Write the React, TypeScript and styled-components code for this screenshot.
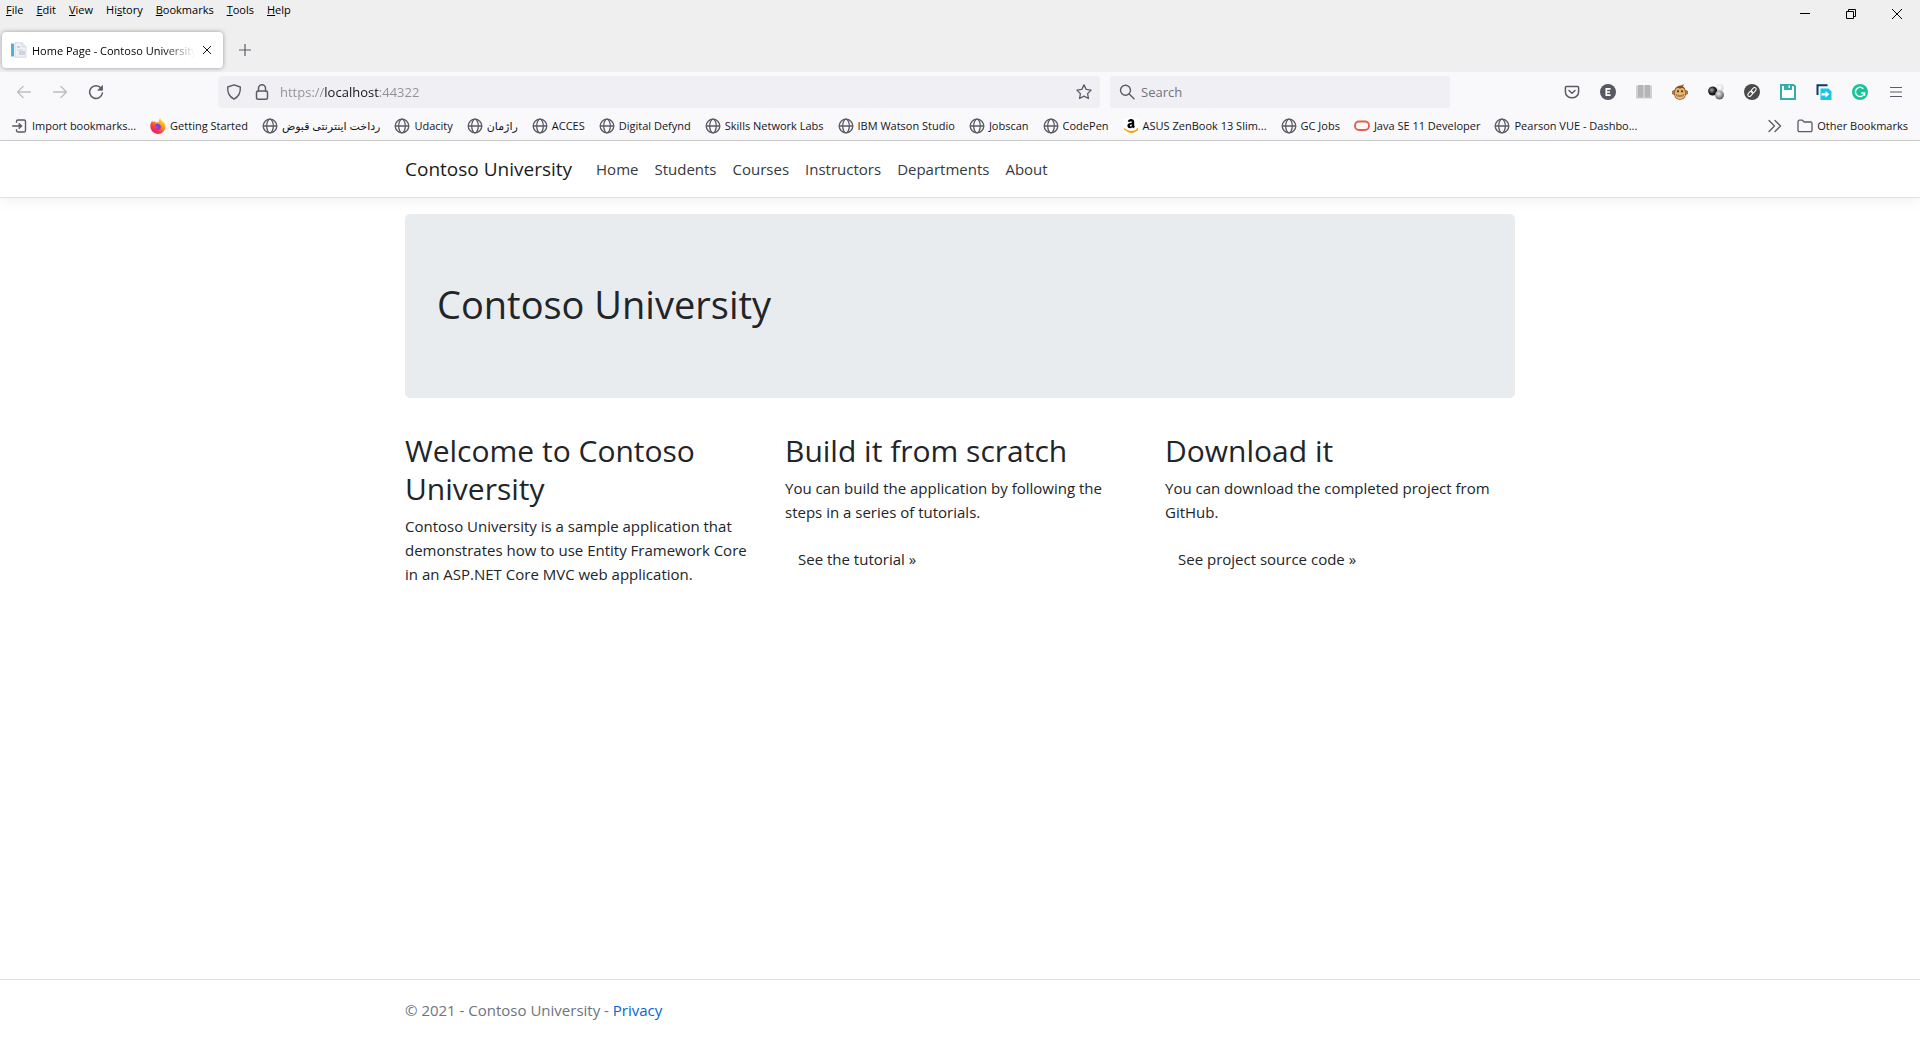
import React from "react";
import styled, { createGlobalStyle, css } from "styled-components";

const GlobalStyle = createGlobalStyle`
  *, *::before, *::after { box-sizing: border-box; }
  body { margin: 0; background: #fff; }
  button, input { font: inherit; color: inherit; }
  svg { display: block; flex: none; }
`;

const Window = styled.div`
  display: flex;
  flex-direction: column;
  min-height: 100vh;
  font-family: "Segoe UI", "Open Sans", "Noto Sans", "DejaVu Sans", sans-serif;
`;

/* ---------- browser chrome ---------- */

const Chrome = styled.header`
  background: #f9f9fb;
  border-bottom: 1px solid #ccc;
  font-size: 11px;
  color: #15141a;
`;

const TitleArea = styled.div`
  display: flex;
  justify-content: space-between;
  height: 72px;
  background: #efefef;
`;

const TitleStart = styled.div`
  display: flex;
  flex-direction: column;
  justify-content: space-between;
`;

const plainButton = css`
  border: 0;
  padding: 0;
  background: none;
  cursor: default;
`;

const MenuBar = styled.div`
  display: flex;
  gap: 13px;
  height: 20px;
  padding: 0 6px;
`;

const MenuButton = styled.button`
  ${plainButton}
  line-height: 20px;
  color: #000;
`;

const TabStrip = styled.div`
  display: flex;
  align-items: center;
  gap: 16px;
  height: 44px;
  padding: 0 2px;
`;

const Tab = styled.div`
  display: flex;
  align-items: center;
  gap: 4px;
  width: 221px;
  height: 36px;
  padding: 0 8px;
  background: #fff;
  border-radius: 4px;
  box-shadow: 0 0 4px rgba(90, 90, 110, 0.6);
`;

const TabTitle = styled.span`
  flex: 1;
  overflow: hidden;
  white-space: nowrap;
  color: #000;
  mask-image: linear-gradient(to left, transparent, #000 32px);
`;

const IconButton = styled.button<{ $w?: number; $h?: number; $dim?: boolean }>`
  ${plainButton}
  display: flex;
  align-items: center;
  justify-content: center;
  flex: none;
  width: ${(p) => p.$w ?? 36}px;
  height: ${(p) => p.$h ?? 32}px;
  color: ${(p) => (p.$dim ? "#bcbcc2" : "#5b5b66")};
`;

const WindowControls = styled.div`
  display: flex;
  height: 28px;

  button { color: #000; }
`;

const Toolbar = styled.div`
  display: flex;
  align-items: center;
  justify-content: space-between;
  height: 40px;
  padding: 0 6px;
`;

const NavButtons = styled.div`
  display: flex;
  flex: 1 1 212px;
`;

const AddressField = styled.div`
  display: flex;
  align-items: center;
  flex: 0 1 882px;
  height: 32px;
  padding: 0 2px;
  border-radius: 4px;
  background: #f0f0f4;
`;

const AddressInput = styled.input`
  flex: 1;
  min-width: 0;
  margin-left: 4px;
  border: 0;
  padding: 0;
  outline: 0;
  font-size: 13px;
  line-height: 24px;
  color: transparent;
  caret-color: #15141a;
  background: linear-gradient(to right, #8f8f96 44px, #15141a 44px 99px, #8f8f96 99px);
  background-clip: text;
  -webkit-background-clip: text;
`;

const SearchField = styled.label`
  display: flex;
  align-items: center;
  gap: 6px;
  flex: 0 1 340px;
  height: 32px;
  margin-left: 10px;
  padding: 0 9px;
  border-radius: 4px;
  background: #f0f0f4;
  color: #5b5b66;
`;

const SearchInput = styled.input`
  flex: 1;
  min-width: 0;
  border: 0;
  padding: 0;
  outline: 0;
  background: none;
  font-size: 13px;

  &::placeholder { color: #72727c; opacity: 1; }
`;

const Extensions = styled.div`
  display: flex;
  justify-content: flex-end;
  flex: 1 1 464px;
`;

const BookmarkBar = styled.nav`
  display: flex;
  align-items: center;
  justify-content: space-between;
  height: 28px;
  padding: 0 12px;
`;

const BookmarkList = styled.div`
  display: flex;
  align-items: center;
  gap: 14px;
`;

const Bookmark = styled.a`
  display: flex;
  align-items: center;
  gap: 4px;
  line-height: 20px;
  white-space: nowrap;
  color: inherit;
  text-decoration: none;

  svg { color: #5b5b66; }
`;

/* ---------- web page ---------- */

const Site = styled.div`
  display: flex;
  flex: 1;
  flex-direction: column;
  font-size: 15px;
  line-height: 24px;
  color: #212529;
`;

const Container = styled.div`
  width: 100%;
  max-width: 1140px;
  margin: 0 auto;
  padding: 0 15px;
`;

const SiteHeader = styled.div`
  padding: 8px 0;
  margin-bottom: 16px;
  background: #fff;
  border-bottom: 1px solid #dee2e6;
  box-shadow: 0 4px 12px rgba(0, 0, 0, 0.05);
`;

const NavRow = styled(Container)`
  display: flex;
  align-items: center;
  height: 40px;
`;

const Brand = styled.a`
  margin-right: 16px;
  font-size: 19px;
  line-height: 30px;
  color: #1b1b1b;
  text-decoration: none;
`;

const NavLink = styled.a`
  padding: 8px;
  color: #343a40;
  text-decoration: none;
`;

const Jumbotron = styled.section`
  padding: 64px 32px;
  margin-bottom: 32px;
  border-radius: 5px;
  background: #e9ecef;
`;

const headingText = css`
  margin: 0 0 6px;
  padding-top: 2px;
  font-weight: 400;
`;

const Title = styled.h1`
  ${headingText}
  font-size: 38px;
  line-height: 48px;
`;

const Columns = styled.div`
  display: grid;
  grid-template-columns: repeat(3, 1fr);
  gap: 30px;
`;

const Heading = styled.h2`
  ${headingText}
  font-size: 30px;
  line-height: 38px;
`;

const Text = styled.p`
  margin: 0 0 16px;
`;

const ActionLink = styled.a`
  display: inline-block;
  padding: 6px 12px;
  border: 1px solid transparent;
  color: #212529;
  text-decoration: none;
`;

const SiteFooter = styled.footer`
  margin-top: auto;
  border-top: 1px solid #dee2e6;
  line-height: 60px;
  color: #6c757d;

  a { color: #0366d6; text-decoration: none; }
`;

/* ---------- icons ---------- */

type IconProps = { size?: number; children: React.ReactNode; w?: number };
const Icon = ({ size = 16, w = 1.3, children }: IconProps) => (
  <svg width={size} height={size} viewBox="0 0 16 16" fill="none" stroke="currentColor" strokeWidth={w} strokeLinecap="round" strokeLinejoin="round" aria-hidden="true">
    {children}
  </svg>
);

const Globe = () => (
  <Icon w={1.3}>
    <circle cx="8" cy="8" r="6.8" />
    <ellipse cx="8" cy="8" rx="3.3" ry="6.8" />
    <path d="M1.400 8h13.200" />
  </Icon>
);

const ImportIcon = () => (
  <Icon w={1.4}>
    <path d="M4.500 4.200V3.400A1.400 1.400 0 0 1 5.900 2h6.200A1.400 1.400 0 0 1 13.500 3.400v9.200a1.400 1.400 0 0 1-1.400 1.400H5.900A1.400 1.400 0 0 1 4.500 12.600v-.8M.7 8h8" />
    <path d="M7.300 5.300 10.200 8l-2.900 2.700z" fill="currentColor" strokeWidth="0.8" />
  </Icon>
);

const FirefoxIcon = () => (
  <svg width="16" height="16" viewBox="0 0 16 16" aria-hidden="true">
    <defs>
      <linearGradient id="fox" x1="0.85" y1="0.1" x2="0.2" y2="0.95">
        <stop offset="0" stopColor="#fff44f" />
        <stop offset="0.35" stopColor="#ff980e" />
        <stop offset="0.7" stopColor="#ff3647" />
        <stop offset="1" stopColor="#e31587" />
      </linearGradient>
    </defs>
    <path d="M10.300 0c.2 1.500 1 2.200 2 3 1.700 1.300 3.300 3 3.300 5.500A7.600 7.600 0 0 1 8 16 7.600 7.600 0 0 1 .3 8.400C.3 5.900 1 4.300 2.300 2.700l.6 1.500 1.800-.9L6 4.500l2.700-.3C8.600 2.500 9.200 1 10.300 0z" fill="url(#fox)" />
    <path d="M5.200 7c1-1.400 2.700-1.600 4-.8 1.800 1 2.400 3.200 1 4.600-1.400 1.500-4 1.300-5-.4 1.500.5 2.600.2 3.200-.8-1.200.3-1.600-.6-2.400-1-.5-.3-1-.8-.8-1.600z" fill="#7542e5" />
  </svg>
);

const AmazonIcon = () => (
  <svg width="16" height="16" viewBox="0 0 16 16" aria-hidden="true">
    <rect width="16" height="16" rx="2" fill="#fff" />
    <path d="M4.800 3.600C5.100 1.900 6.300 1 8 1c2.100 0 3.200 1 3.200 2.900v3.300c0 .7.200 1 .8 1.600L10.300 10.300c-.5-.3-.8-.7-1-1.100-1.600 1.800-4.900 1.200-4.900-1.500 0-2.100 1.900-2.900 4.400-2.900 0-1-.1-1.600-.9-1.600-.6 0-.9.300-1 .9zM8.800 6.400c-1.200 0-1.900.3-1.900 1.200 0 1.400 1.900 1.100 1.900-.7z" fill="#000" />
    <path d="M1.500 11c3.600 3.300 9 3.300 12.500 1.200l.4-1.500" fill="none" stroke="#f90" strokeWidth="1.500" strokeLinecap="round" />
    <path d="M4.500 13.500c2.300 1 5.200.9 7.500 0" fill="none" stroke="#f90" strokeWidth="1.300" />
  </svg>
);

const OracleIcon = () => (
  <svg width="16" height="16" viewBox="0 0 16 16" aria-hidden="true">
    <rect x="1" y="3.500" width="14" height="8.500" rx="4" fill="none" stroke="#e5604c" strokeWidth="1.900" />
  </svg>
);

const PageIcon = () => (
  <svg width="18" height="16" viewBox="0 0 18 16" aria-hidden="true">
    <path d="M5 .7h7l4 4v10.600H5z" fill="#eef1f6" stroke="#cdd3de" strokeWidth="0.8" />
    <path d="M12 .7v4h4" fill="none" stroke="#cdd3de" strokeWidth="0.8" />
    <path d="M7 4h3v2H7zM9 9h6v4H9z" fill="#ccd3df" />
    <path d="M7 8h6" stroke="#ccd3df" />
    <rect x="1" y="1.500" width="3" height="13" fill="#5da9da" />
  </svg>
);

const FolderIcon = () => (
  <Icon>
    <path d="M1 3.600A1.400 1.400 0 0 1 2.400 2.200h3L7.200 4h6.400A1.400 1.400 0 0 1 15 5.400v6.800a1.400 1.400 0 0 1-1.400 1.400H2.400A1.400 1.400 0 0 1 1 12.200z" />
  </Icon>
);

const extensions: { name: string; art: React.ReactNode }[] = [
  {
    name: "Save to Pocket",
    art: (
      <Icon w={1.500}>
        <path d="M2.400 2.500h11.200c.6 0 1 .4 1 1V8a6.600 5.800 0 0 1-13.200 0V3.500c0-.6.4-1 1-1z" />
        <path d="M5 6.500 8 9.300l3-2.800" />
      </Icon>
    ),
  },
  {
    name: "E extension",
    art: (
      <svg width="16" height="16" viewBox="0 0 16 16">
        <circle cx="8" cy="8" r="8" fill="#585863" />
        <path d="M10.600 4.800H6.300v6.400h4.300M6.300 8h3.700" fill="none" stroke="#fff" strokeWidth="1.700" />
      </svg>
    ),
  },
  {
    name: "Reader",
    art: (
      <svg width="16" height="16" viewBox="0 0 16 16">
        <path d="M0 1.500h16v13H0z" fill="#d0d0d0" />
        <path d="M2 1h5.500v12.500H2zM8.500 1H14v12.500H8.500z" fill="#b5b5b5" />
        <path d="M8 1v14" stroke="#e4e4e4" strokeWidth="0.6" />
      </svg>
    ),
  },
  {
    name: "Monkey scripts",
    art: (
      <svg width="16" height="16" viewBox="0 0 16 16">
        <circle cx="2" cy="8.500" r="1.900" fill="#c98542" stroke="#6b3a12" strokeWidth="0.6" />
        <circle cx="14" cy="8.500" r="1.900" fill="#c98542" stroke="#6b3a12" strokeWidth="0.6" />
        <path d="M2.300 8C2.300 4.500 4.500 2.300 7.500 1.800 9 1.500 10.500 1 12 .3c-.3 1-.8 1.500-1.300 2 2 1.200 3 3.200 3 5.700 1 4.500-1.700 7.700-5.700 7.700S1.500 12.500 2.300 8z" fill="#8a4b17" />
        <path d="M3.200 7.500c0-2.200 1-3.500 2.700-3.500.9 0 1.600.4 2.100.8.500-.4 1.200-.8 2.100-.8 1.700 0 2.700 1.300 2.700 3.500 1.600 3.800-.8 7.600-4.800 7.600s-6.200-3.800-4.800-7.600z" fill="#eab676" />
        <ellipse cx="6" cy="7.200" rx="0.8" ry="1.200" fill="#1c3a1c" />
        <ellipse cx="10" cy="7.200" rx="0.8" ry="1.200" fill="#1c3a1c" />
        <path d="M4 10.500c1.400 1.400 6.600 1.400 8 0-.6 2.600-7.400 2.600-8 0z" fill="#fff" stroke="#7a3b12" strokeWidth="0.600" />
      </svg>
    ),
  },
  {
    name: "Spheres",
    art: (
      <svg width="16" height="16" viewBox="0 0 16 16">
        <defs>
          <radialGradient id="dark" cx="0.4" cy="0.4" r="0.6"><stop offset="0" stopColor="#aaa" /><stop offset="0.6" stopColor="#222" /><stop offset="1" stopColor="#111" /></radialGradient>
          <radialGradient id="mid" cx="0.4" cy="0.35" r="0.6"><stop offset="0" stopColor="#eee" /><stop offset="1" stopColor="#666" /></radialGradient>
          <radialGradient id="light" cx="0.4" cy="0.4" r="0.6"><stop offset="0" stopColor="#fff" /><stop offset="1" stopColor="#d8d8d8" /></radialGradient>
        </defs>
        <circle cx="12" cy="4" r="3.700" fill="url(#light)" />
        <circle cx="4.700" cy="7" r="4.600" fill="url(#dark)" />
        <circle cx="11.500" cy="11" r="4.500" fill="url(#mid)" />
      </svg>
    ),
  },
  {
    name: "Link tools",
    art: (
      <svg width="16" height="16" viewBox="0 0 16 16">
        <circle cx="8" cy="8" r="8" fill="#4b4b4b" />
        <g transform="rotate(-48 8 8)" fill="none" stroke="#fff" strokeWidth="1">
          <rect x="2.600" y="6.300" width="6" height="3.400" rx="1.700" />
          <rect x="7.400" y="6.300" width="6" height="3.400" rx="1.700" />
        </g>
      </svg>
    ),
  },
  {
    name: "Save page",
    art: (
      <svg width="16" height="16" viewBox="0 0 16 16">
        <path d="M1 1h12.500L15 2.500V15H1z" fill="#fff" stroke="#33adad" strokeWidth="2" />
        <path d="M4 0h8v6H4z" fill="#33adad" />
        <path d="M8.500 1.500H10V4H8.500z" fill="#fff" />
      </svg>
    ),
  },
  {
    name: "Send page",
    art: (
      <svg width="16" height="16" viewBox="0 0 16 16">
        <path d="M1.500 11V1.200h10" fill="none" stroke="#0b3b66" strokeWidth="2" />
        <path d="M4.500 4.500h8l3 3V16h-11z" fill="#14c8e6" />
        <path d="M5.500 9.200h4V7l3.800 3.300-3.800 3.300v-2.200h-4z" fill="#fff" />
      </svg>
    ),
  },
  {
    name: "Grammar check",
    art: (
      <svg width="16" height="16" viewBox="0 0 16 16">
        <circle cx="8" cy="8" r="8" fill="#15c39a" />
        <path d="M11.300 4.700A4.600 4.600 0 1 0 12.500 9H9.200M12.500 9v2.800" fill="none" stroke="#fff" strokeWidth="1.500" />
      </svg>
    ),
  },
  {
    name: "Application menu",
    art: (
      <Icon w={1.2}>
        <path d="M2.500 3.500h11M2.500 8h11M2.500 12.500h11" />
      </Icon>
    ),
  },
];

const menus: [string, string, string][] = [
  ["", "F", "ile"],
  ["", "E", "dit"],
  ["", "V", "iew"],
  ["Hi", "s", "tory"],
  ["", "B", "ookmarks"],
  ["", "T", "ools"],
  ["", "H", "elp"],
];

const bookmarks: { label: string; icon?: React.ReactNode }[] = [
  { label: "Import bookmarks...", icon: <ImportIcon /> },
  { label: "Getting Started", icon: <FirefoxIcon /> },
  { label: "رداخت اینترنتی قبوض" },
  { label: "Udacity" },
  { label: "راژمان" },
  { label: "ACCES" },
  { label: "Digital Defynd" },
  { label: "Skills Network Labs" },
  { label: "IBM Watson Studio" },
  { label: "Jobscan" },
  { label: "CodePen" },
  { label: "ASUS ZenBook 13 Slim...", icon: <AmazonIcon /> },
  { label: "GC Jobs" },
  { label: "Java SE 11 Developer", icon: <OracleIcon /> },
  { label: "Pearson VUE - Dashbo..." },
];

const navLinks = ["Home", "Students", "Courses", "Instructors", "Departments", "About"];

const BrowserChrome = () => (
  <Chrome>
    <TitleArea>
      <TitleStart>
        <MenuBar>
          {menus.map(([before, key, after]) => (
            <MenuButton key={key + after}>
              {before}
              <u>{key}</u>
              {after}
            </MenuButton>
          ))}
        </MenuBar>
        <TabStrip>
          <Tab>
            <PageIcon />
            <TabTitle>Home Page - Contoso University</TabTitle>
            <IconButton $w={16} $h={24} aria-label="Close tab">
              <svg width="10" height="10" viewBox="0 0 10 10" stroke="#15141a"><path d="M1 1l8 8M9 1l-8 8" /></svg>
            </IconButton>
          </Tab>
          <IconButton $w={12} aria-label="New tab">
            <svg width="12" height="12" viewBox="0 0 12 12" stroke="#5b5b66" strokeWidth="1.200"><path d="M6 0v12M0 6h12" /></svg>
          </IconButton>
        </TabStrip>
      </TitleStart>
      <WindowControls>
        <IconButton $w={46} $h={28} aria-label="Minimize">
          <svg width="10" height="10" viewBox="0 0 10 10" stroke="currentColor"><path d="M0 4.500h10" /></svg>
        </IconButton>
        <IconButton $w={46} $h={28} aria-label="Restore">
          <svg width="10" height="10" viewBox="0 0 10 10" fill="none" stroke="currentColor"><path d="M.5 2.500h7v7h-7zM2.500 2.500v-2h7v7h-2" /></svg>
        </IconButton>
        <IconButton $w={46} $h={28} aria-label="Close">
          <svg width="10" height="10" viewBox="0 0 10 10" stroke="currentColor"><path d="M0 0l10 10M10 0L0 10" /></svg>
        </IconButton>
      </WindowControls>
    </TitleArea>

    <Toolbar>
      <NavButtons>
        <IconButton $dim aria-label="Back">
          <Icon><path d="M14.500 8H1.500M7 2.500 1.500 8 7 13.500" /></Icon>
        </IconButton>
        <IconButton $dim aria-label="Forward">
          <Icon><path d="M1.500 8h13M9 2.500 14.500 8 9 13.500" /></Icon>
        </IconButton>
        <IconButton aria-label="Reload">
          <Icon w={1.500}>
            <path d="M13 4A6.400 6.400 0 1 0 14.400 9" />
            <path d="M14.500 1.800v4.400h-4.400z" fill="currentColor" strokeWidth="0.8" />
          </Icon>
        </IconButton>
      </NavButtons>
      <AddressField>
        <IconButton $w={28} aria-label="Tracking protection">
          <Icon w={1.400}><path d="M8 .8 14.300 3c.4 5.500-1.300 9.500-6.300 12.200C3 12.500 1.300 8.500 1.700 3z" /></Icon>
        </IconButton>
        <IconButton $w={28} aria-label="Site security">
          <Icon w={1.500}>
            <rect x="2.500" y="7" width="11" height="8.200" rx="1.500" />
            <path d="M4.500 7V4.300a3.500 3.500 0 0 1 7 0V7" />
          </Icon>
        </IconButton>
        <AddressInput aria-label="Address" defaultValue="https://localhost:44322" spellCheck={false} />
        <IconButton $w={28} aria-label="Bookmark this page">
          <Icon><path d="M8 .9l2.200 4.500 4.900.7-3.500 3.500.8 4.900L8 12.200l-4.400 2.300.8-4.900L.9 6.100l4.900-.7z" /></Icon>
        </IconButton>
      </AddressField>
      <SearchField>
        <Icon w={1.400}>
          <circle cx="6.500" cy="6.200" r="5" />
          <path d="M10.200 9.900 15 14.700" />
        </Icon>
        <SearchInput aria-label="Search" placeholder="Search" />
      </SearchField>
      <Extensions>
        {extensions.map((e) => (
          <IconButton key={e.name} aria-label={e.name}>{e.art}</IconButton>
        ))}
      </Extensions>
    </Toolbar>

    <BookmarkBar aria-label="Bookmarks">
      <BookmarkList>
        {bookmarks.map((b) => (
          <Bookmark key={b.label} href="#">
            {b.icon ?? <Globe />}
            {b.label}
          </Bookmark>
        ))}
      </BookmarkList>
      <BookmarkList>
        <IconButton $w={16} $h={20} aria-label="More bookmarks">
          <Icon><path d="M2 2.500 7.500 8 2 13.500M8 2.500 13.500 8 8 13.500" /></Icon>
        </IconButton>
        <Bookmark href="#">
          <FolderIcon />
          Other Bookmarks
        </Bookmark>
      </BookmarkList>
    </BookmarkBar>
  </Chrome>
);

export default function App() {
  return (
    <Window>
      <GlobalStyle />
      <BrowserChrome />
      <Site>
        <SiteHeader>
          <NavRow as="nav">
            <Brand href="#">Contoso University</Brand>
            {navLinks.map((l) => (
              <NavLink key={l} href="#">{l}</NavLink>
            ))}
          </NavRow>
        </SiteHeader>
        <Container as="main">
          <Jumbotron>
            <Title>Contoso University</Title>
          </Jumbotron>
          <Columns>
            <section>
              <Heading>Welcome to Contoso University</Heading>
              <Text>
                Contoso University is a sample application that demonstrates how to use Entity Framework Core in an
                ASP.NET Core MVC web application.
              </Text>
            </section>
            <section>
              <Heading>Build it from scratch</Heading>
              <Text>You can build the application by following the steps in a series of tutorials.</Text>
              <ActionLink href="#">See the tutorial »</ActionLink>
            </section>
            <section>
              <Heading>Download it</Heading>
              <Text>You can download the completed project from GitHub.</Text>
              <ActionLink href="#">See project source code »</ActionLink>
            </section>
          </Columns>
        </Container>
        <SiteFooter>
          <Container>
            © 2021 - Contoso University - <a href="#">Privacy</a>
          </Container>
        </SiteFooter>
      </Site>
    </Window>
  );
}
